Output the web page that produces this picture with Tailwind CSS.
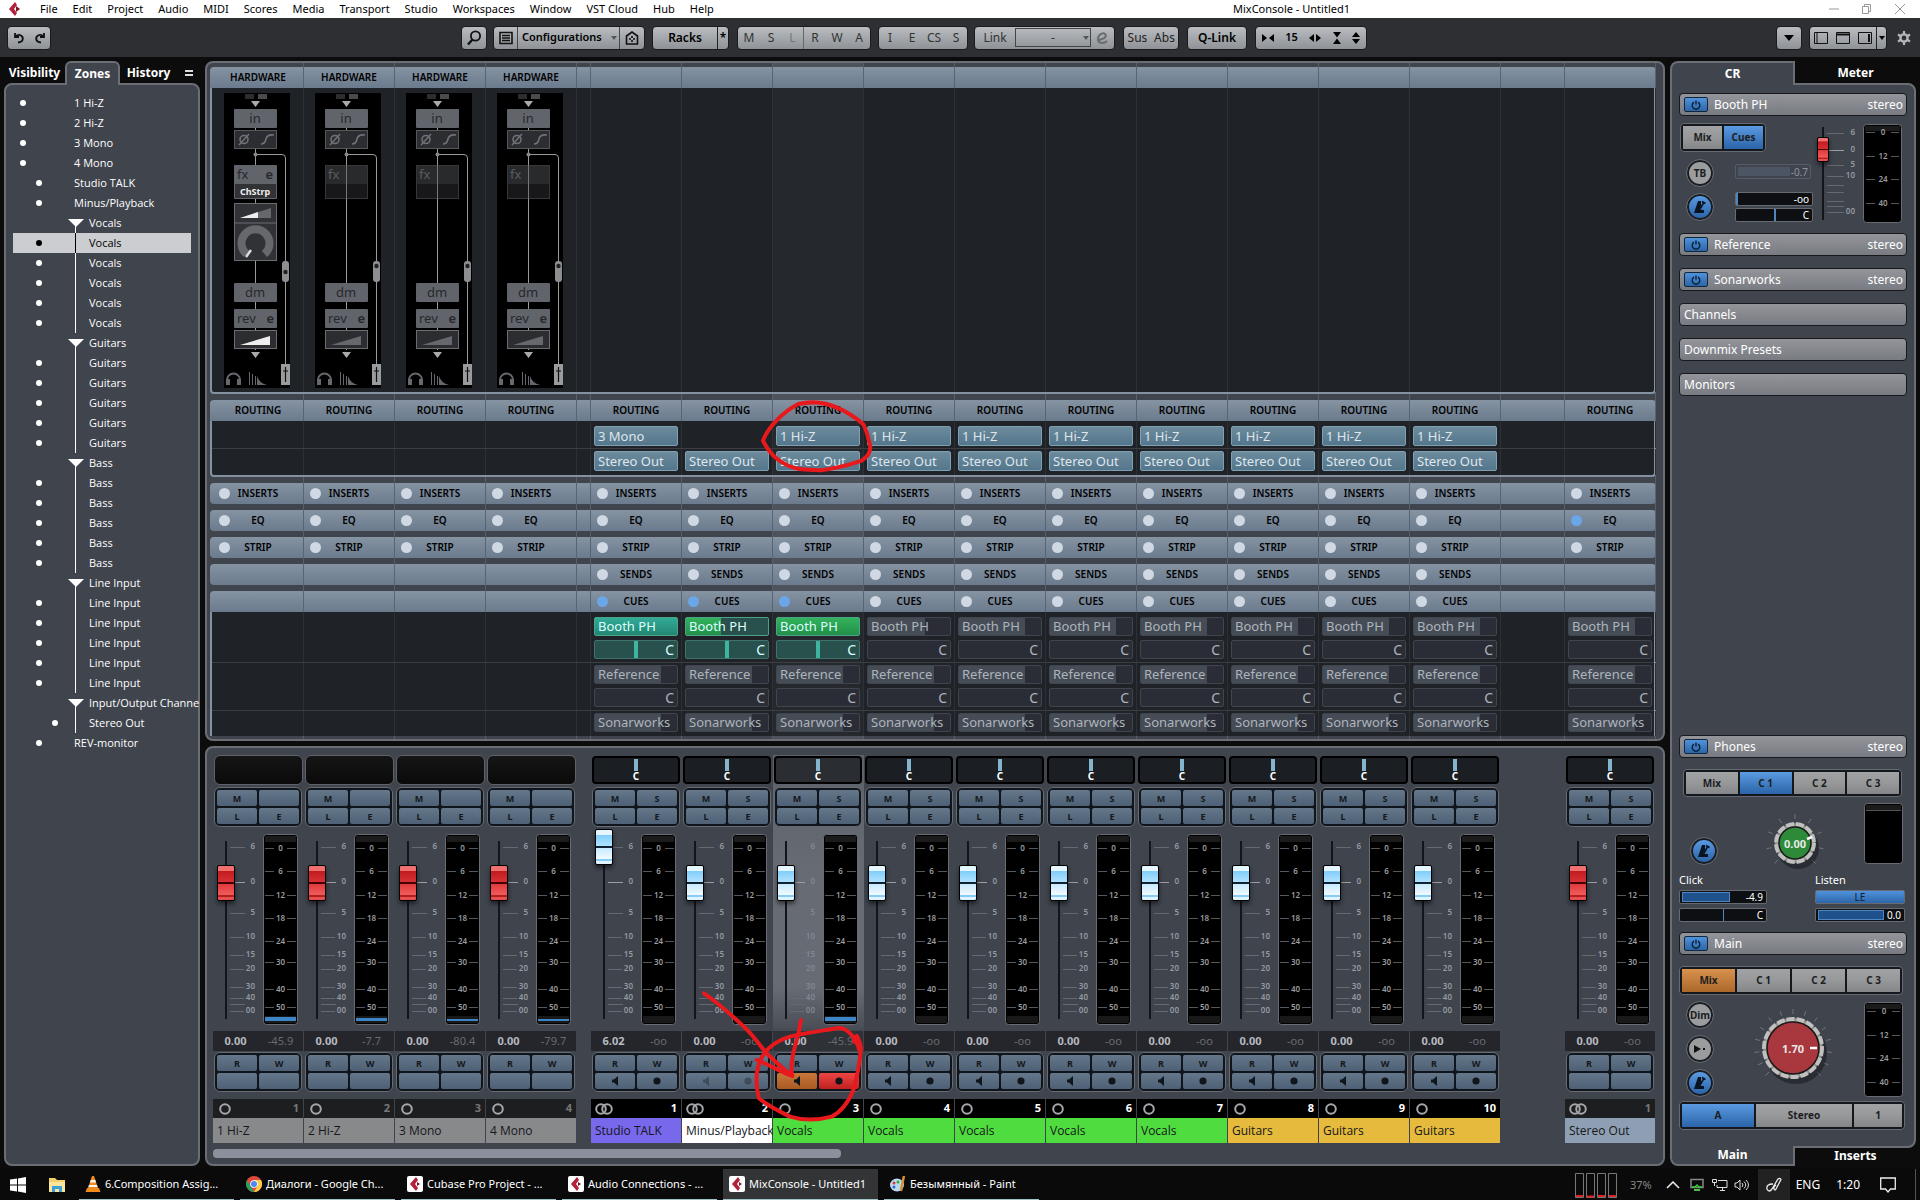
<!DOCTYPE html>
<html lang="en">
<head>
  <meta charset="UTF-8" />
  <meta name="viewport" content="width=device-width, initial-scale=1.0" />
  <title>MixConsole - Untitled1</title>
  <script src="https://cdn.jsdelivr.net/npm/@tailwindcss/browser@4"></script>
</head>
<body class="relative min-h-screen flex flex-col bg-[#0c0c0d] text-white font-['Noto_Sans','Open_Sans',sans-serif] text-[11px] overflow-x-hidden">

  <!-- MENU -->
  <header class="h-[18px] shrink-0 bg-white text-black flex items-center text-[11px]">
    <svg class="w-4 h-4 ml-[7px] mr-[17px]" viewBox="0 0 16 16">
      <path d="M8 1 L2 8 L8 15 L10 12 L7 8 L10 4 Z" fill="#b3203a"/><path d="M9 5 L13 8 L9 11 Z" fill="#7d1226"/>
    </svg>
    <nav class="flex gap-[15px]" id="menu"></nav>
    <span class="ml-auto w-[118px] whitespace-nowrap">MixConsole - Untitled1</span>
    <div class="ml-[478px] mr-[15px] flex items-center gap-[23px]">
      <button aria-label="Minimize"><svg class="w-2.5 h-3" viewBox="0 0 10 12"><path d="M0 6h10" stroke="#999"/></svg></button>
      <button aria-label="Restore"><svg class="w-2.5 h-3" viewBox="0 0 10 12" fill="none" stroke="#999"><path d="M.5 3.5h6v7h-6zM2.500 3.500v-2h6v7h-2"/></svg></button>
      <button aria-label="Close"><svg class="w-2.5 h-3" viewBox="0 0 10 12"><path d="M0 1l10 10M10 1L0 11" stroke="#999"/></svg></button>
    </div>
  </header>

  <!-- TOOLBAR -->
  <div class="h-[39px] shrink-0 bg-[#2d2f33] flex items-center px-[7px] text-black text-[12px]" id="toolbar">
    <div class="flex h-6 w-11 rounded-sm bg-linear-to-b from-[#b9bcc0] to-[#8f9397] border border-[#1a1b1d] items-center justify-around">
      <button aria-label="Undo"><svg class="w-3 h-3" viewBox="0 0 12 12" fill="none" stroke="#111" stroke-width="1.8"><path d="M2 1v4h4M2.500 4.500C6 1 11 4 9.500 8Q9 10 5 10.500"/></svg></button>
      <button aria-label="Redo"><svg class="w-3 h-3" viewBox="0 0 12 12" fill="none" stroke="#111" stroke-width="1.8"><path d="M10 1v4H6M9.500 4.500C6 1 1 4 2.500 8Q3 10 7 10.500"/></svg></button>
    </div>
    <button aria-label="Search" class="ml-[410px] h-6 w-[26px] rounded-sm bg-linear-to-b from-[#b9bcc0] to-[#8f9397] border border-[#1a1b1d] flex items-center justify-center">
      <svg class="w-4 h-4" viewBox="0 0 16 16" fill="none" stroke="#111" stroke-width="1.8"><circle cx="9.500" cy="6" r="4.600"/><path d="M6.500 9.500L2 14.500" stroke-width="2.400"/></svg>
    </button>
    <div class="ml-1.5 flex h-6 rounded-sm bg-linear-to-b from-[#b9bcc0] to-[#8f9397] border border-[#1a1b1d] font-semibold">
      <button aria-label="Show list" class="w-6 border-r border-[#44474b] flex items-center justify-center"><svg class="w-3.5 h-3.5" viewBox="0 0 14 14" fill="none" stroke="#111" stroke-width="1.6"><path d="M1 1.500h12v11H1zM3 4.500h8M3 7h8M3 9.500h8"/></svg></button>
      <button class="w-[102px] border-r border-[#44474b] flex items-center justify-between pl-1 pr-0.5 text-[11px]">Configurations <svg class="w-1.5 h-1.5" viewBox="0 0 6 6"><path d="M0 1h6L3 5z" fill="#555"/></svg></button>
      <button aria-label="Home" class="w-6 flex items-center justify-center"><svg class="w-3.5 h-3.5" viewBox="0 0 14 14" fill="none" stroke="#111" stroke-width="1.6"><path d="M1.500 5L7 1l5.500 4v8h-11z"/><path d="M4 8h2M8 8h2M7 5v2M7 9v2"/></svg></button>
    </div>
    <div class="ml-[7px] flex h-6 rounded-sm bg-linear-to-b from-[#b9bcc0] to-[#8f9397] border border-[#1a1b1d] font-semibold">
      <button class="w-[65px] border-r border-[#222]">Racks</button><button class="w-2.5 flex items-center justify-center">*</button>
    </div>
    <div class="ml-2 flex h-6 rounded-sm bg-linear-to-b from-[#b9bcc0] to-[#8f9397] border border-[#1a1b1d] text-[#333]">
      <button class="w-[22px]">M</button><button class="w-[22px]">S</button><button class="w-[22px] text-[#777] border-r border-[#666]">L</button><button class="w-[22px]">R</button><button class="w-[22px]">W</button><button class="w-[22px]">A</button>
    </div>
    <div class="ml-[7px] flex h-6 rounded-sm bg-linear-to-b from-[#b9bcc0] to-[#8f9397] border border-[#1a1b1d] text-[#333]">
      <button class="w-[22px]">I</button><button class="w-[22px]">E</button><button class="w-[22px]">CS</button><button class="w-[22px]">S</button>
    </div>
    <div class="ml-1.5 flex items-center h-6 rounded-sm bg-linear-to-b from-[#b9bcc0] to-[#8f9397] border border-[#1a1b1d] text-[#333]">
      <label for="linkGroup" class="w-10 text-center">Link</label>
      <select id="linkGroup" class="appearance-none w-[76px] h-[19px] border border-[#444] text-center leading-none"><option>-</option></select>
      <svg class="w-1.5 h-1.5 -ml-2" viewBox="0 0 6 6"><path d="M0 1h6L3 5z" fill="#555"/></svg>
      <button aria-label="Edit link" class="w-[25px] pl-1.5"><svg class="w-3.5 h-3.5" viewBox="0 0 14 14" fill="none" stroke="#6a6d70" stroke-width="2"><path d="M2 9C8 9 12 6 10.500 3.500 9 1 3 3 3 8c0 5 6 5 9 2"/></svg></button>
    </div>
    <div class="ml-2 flex h-6 rounded-sm bg-linear-to-b from-[#b9bcc0] to-[#8f9397] border border-[#1a1b1d] text-[#222]">
      <button class="w-[27px]">Sus</button><button class="w-[27px]">Abs</button>
    </div>
    <button class="ml-2 h-6 w-[60px] rounded-sm bg-linear-to-b from-[#b9bcc0] to-[#8f9397] border border-[#1a1b1d] font-semibold">Q-Link</button>
    <div class="ml-2 flex h-6 items-center justify-around w-[112px] rounded-sm bg-linear-to-b from-[#b9bcc0] to-[#8f9397] border border-[#1a1b1d] font-semibold text-[11px]">
      <button aria-label="Narrower"><svg class="w-3 h-2" viewBox="0 0 12 8"><path d="M0 0l5 4-5 4zM12 0L7 4l5 4z"/></svg></button>15
      <button aria-label="Wider"><svg class="w-3 h-2" viewBox="0 0 12 8"><path d="M5 0L0 4l5 4zM7 0l5 4-5 4z"/></svg></button>
      <button aria-label="Lower"><svg class="w-2 h-3" viewBox="0 0 8 12"><path d="M0 0h8L4 5.500zM0 12h8L4 6.500z"/></svg></button>
      <button aria-label="Higher"><svg class="w-2 h-3" viewBox="0 0 8 12"><path d="M0 5h8L4 0zM0 7h8L4 12z"/></svg></button>
    </div>
    <button aria-label="More" class="ml-auto h-6 w-[26px] rounded-sm bg-linear-to-b from-[#b9bcc0] to-[#8f9397] border border-[#1a1b1d] flex items-center justify-center"><svg class="w-2.5 h-1.5" viewBox="0 0 10 6"><path d="M0 0h10L5 6z"/></svg></button>
    <div class="ml-[7px] flex h-6 rounded-sm bg-linear-to-b from-[#b9bcc0] to-[#8f9397] border border-[#1a1b1d] items-center">
      <button aria-label="Left zone" class="w-[22px] flex justify-center"><svg class="w-3.5 h-3" viewBox="0 0 14 12" fill="none" stroke="#111"><path d="M.5.5h13v11H.5zM3 1v10" /></svg></button>
      <button aria-label="Top zone" class="w-[22px] flex justify-center"><svg class="w-3.5 h-3" viewBox="0 0 14 12" fill="none" stroke="#111"><path d="M.5.5h13v11H.5z"/><path d="M1 2.500h12" stroke-width="2"/></svg></button>
      <button aria-label="Right zone" class="w-[22px] flex justify-center"><svg class="w-3.5 h-3" viewBox="0 0 14 12" fill="none" stroke="#111"><path d="M.5.5h13v11H.5z"/><path d="M11 2v8" stroke-width="2"/></svg></button>
      <button aria-label="Zones" class="w-2.5 h-full border-l border-[#222] flex items-center justify-center"><svg class="w-1.5 h-1.5" viewBox="0 0 6 6"><path d="M0 1h6L3 5z"/></svg></button>
    </div>
    <button aria-label="Setup" class="ml-2.5 mr-0.5"><svg class="w-3.5 h-3.5" viewBox="0 0 14 14" fill="none" stroke="#b4b7ba"><circle cx="7" cy="7" r="3.600" stroke-width="2.400"/><path d="M7 0v3M7 11v3M1 3.500l2.500 1.500M10.500 9L13 10.500M1 10.500L3.500 9M10.500 5L13 3.500" stroke-width="2.200"/></svg></button>
  </div>

  <main class="flex-1 flex gap-[5px] px-1 pt-1 pb-[3px]">
    <!-- ZONES -->
    <aside class="w-[196px] shrink-0 flex flex-col">
      <div class="flex h-6 shrink-0 relative z-10 -mb-[2px] font-bold text-[12px]">
        <button class="w-[61px] text-center">Visibility</button>
        <button class="w-[55px] h-6 rounded-t-md border-2 border-b-0 border-[#6b6e75] bg-[#3f444d]">Zones</button>
        <button class="w-[57px] text-center">History</button>
        <button aria-label="Options" class="ml-2"><svg class="w-2 h-2" viewBox="0 0 8 8"><path d="M0 2h8M0 6h8" stroke="#ddd" stroke-width="2"/></svg></button>
      </div>
      <ul id="zones" class="flex-1 rounded-lg border-2 border-[#6b6e75] bg-[#3f444d] pt-2 px-[7px] font-['Open_Sans','Noto_Sans',sans-serif]"></ul>
    </aside>

    <div class="flex-1 min-w-0 flex flex-col gap-[5px]">
      <!-- RACKS -->
      <section class="relative flex-1 flex flex-col gap-1.5 rounded-lg border-2 border-[#6b6e75] bg-[#3f444d] pt-1 pb-[3px] pl-[3px] pr-[7px] overflow-hidden">
        <div id="lines" class="absolute inset-y-0 left-1.5 right-2 flex"></div>
        <div id="racks" class="relative flex-1 flex flex-col gap-1.5"></div>
      </section>
      <!-- FADERS -->
      <section class="rounded-lg border-2 border-[#6b6e75] bg-[#3f444d] pt-[7px] pb-1.5 pl-1.5 overflow-hidden">
        <div id="strips" class="flex"></div>
        <div class="mt-1.5 h-[9px] w-[628px] rounded-sm bg-[#8a919d]"></div>
      </section>
    </div>

    <!-- CONTROL ROOM -->
    <aside class="w-[246px] shrink-0 flex flex-col">
      <div class="flex h-6 shrink-0 relative z-10 -mb-[2px] font-bold text-[12px]">
        <button class="w-[125px] h-6 rounded-tl-lg border-2 border-b-0 border-[#6b6e75] bg-[#3f444d]">CR</button>
        <button class="flex-1">Meter</button>
      </div>
      <div id="room" class="flex-1 flex flex-col rounded-tr-lg rounded-br-lg border-2 border-[#6b6e75] bg-[#3f444d] pt-2 px-[7px]"></div>
      <div class="flex h-5 shrink-0 relative z-10 -mt-[2px] font-bold text-[12px]">
        <button class="w-[125px] h-5 rounded-bl-lg border-2 border-t-0 border-[#6b6e75] bg-[#3f444d] leading-none">Main</button>
        <button class="flex-1 leading-none">Inserts</button>
      </div>
    </aside>
  </main>

  <!-- TASKBAR -->
  <footer class="h-8 shrink-0 bg-[#0a0a0b] flex items-center text-[12px]">
    <button aria-label="Start" class="ml-2.5"><svg class="w-4 h-4" viewBox="0 0 16 16" fill="#fff"><path d="M0 2.500l7-1v6H0zM8 1.400L16 0v7.500H8zM0 8.500h7v6l-7-1zM8 8.500h8V16l-8-1.400z"/></svg></button>
    <button aria-label="Explorer" class="ml-[22px] mr-[13px]"><svg class="w-[18px] h-4" viewBox="0 0 18 16"><path d="M1 1h6l2 2h8v12H1z" fill="#f3cf6a"/><path d="M1 5h16v10H1z" fill="#fbe49c"/><path d="M4 15V9h10v6h-3v-3H7v3z" fill="#3aa0d8"/></svg></button>
    <div id="tasks" class="flex gap-1.5 h-full"></div>
    <div class="ml-auto flex items-center h-full">
      <svg class="w-[43px] h-[25px]" viewBox="0 0 43 25" fill="none" stroke="#777"><path d="M.5.500h8v24h-8zM11.500.500h8v24h-8zM22.500.500h8v24h-8zM33.500.500h8v24h-8z"/><path d="M1 23h7M12 23.500h7M23 23h7M34 23h7" stroke="#d22" stroke-width="2"/></svg>
      <span class="ml-3 text-[#888] text-[11px]">37%</span>
      <svg class="ml-3.5 w-3.5 h-2" viewBox="0 0 14 8" fill="none" stroke="#eee" stroke-width="1.500"><path d="M1 7l6-6 6 6"/></svg>
      <svg class="ml-2.5 w-3.5 h-3.5" viewBox="0 0 14 14" fill="none"><path d="M1 1.500h12v8H1z" stroke="#888" stroke-width="1.500"/><path d="M2 9h3l2-2 2 2h3" stroke="#3c3" stroke-width="1.500"/><path d="M4 12h6" stroke="#5b5" stroke-width="2"/></svg>
      <svg class="ml-2 w-4 h-3.5" viewBox="0 0 16 14" fill="none" stroke="#ddd"><path d="M6 2.500h9v7H5V7M8 12.500h5M10.500 10v2M.5 1.500h4v3h-4zM2.500 5v3"/></svg>
      <svg class="ml-1.5 w-4 h-3.5" viewBox="0 0 16 14" fill="none" stroke="#ddd"><path d="M1 5v4h2l3 3V2L3 5zM8 5q2 2 0 4M10 3.500q3.500 3.500 0 7M12 2q5 5 0 10"/></svg>
      <span class="ml-2 w-8 h-full bg-[#222] flex items-center justify-center"><svg class="w-4 h-4" viewBox="0 0 16 16" fill="none" stroke="#eee" stroke-width="1.300"><path d="M6 12L12 2q2-1.500 3 .5L10 12q-1 2-2 0t2-4M7 7Q0 7 1 12q2 4 5 0"/></svg></span>
      <span class="ml-1.5">ENG</span>
      <span class="ml-4">1:20</span>
      <svg class="ml-5 mr-[19px] w-4 h-4" viewBox="0 0 16 16" fill="none" stroke="#eee" stroke-width="1.300"><path d="M.7 1h14.600v11H10.500L8 15l-2.500-3H.7z"/></svg>
      <span class="h-full w-[5px] border-l border-[#555]"></span>
    </div>
  </footer>

  <!-- MARKER NOTES -->
  <svg class="absolute left-0 top-0 pointer-events-none z-20" width="1200" height="1200" fill="none" stroke="#e8191c" stroke-linecap="round" stroke-linejoin="round">
    <g transform="translate(680 390) scale(.3333)" stroke-width="12">
      <path d="M475 55C440 38 400 32 355 42C310 65 265 110 249 152C262 180 285 208 320 225C350 240 380 240 425 241C460 236 500 228 545 212C570 195 573 180 570 165C565 145 560 120 550 103C530 85 500 65 465 50"/>
    </g>
    <g transform="translate(560 740) scale(.3333)" stroke-width="12">
      <path d="M432 760C480 792 520 830 560 868C590 898 605 925 625 945C650 970 670 985 695 1006"/>
      <path d="M590 960C620 970 660 995 697 1008C690 970 700 940 710 900C718 880 718 860 723 840"/>
      <path d="M898 930C890 900 865 862 835 864C790 872 740 878 690 890C640 905 610 935 600 965C585 1000 588 1040 597 1075C620 1095 660 1115 690 1130C730 1142 770 1142 815 1130C850 1112 868 1080 880 1050C892 1010 900 960 903 925C900 905 895 895 890 888L882 905"/>
    </g>
  </svg>

<script>
const $ = id => document.getElementById(id);

/* 1. Menu */
$('menu').innerHTML = ['File','Edit','Project','Audio','MIDI','Scores','Media','Transport','Studio','Workspaces','Window','VST Cloud','Hub','Help']
  .map(t => `<button>${t}</button>`).join('');

/* 2. Zones: [name, kind] */
const group = (name, n) => [[name, 'head'], ...Array(n).fill([name, 'item'])];
const zones = [['1 Hi-Z','in'],['2 Hi-Z','in'],['3 Mono','in'],['4 Mono','in'],['Studio TALK','top'],['Minus/Playback','top'],
  ...group('Vocals', 5), ...group('Guitars', 5), ...group('Bass', 5), ...group('Line Input', 5),
  ['Input/Output Channe','head'],['Stereo Out','out'],['REV-monitor','top']];
const dotPad = { in: 'pl-[7px]', top: 'pl-[23px]', item: 'pl-[23px]', out: 'pl-[39px]', head: '' };
$('zones').innerHTML = zones.map(([name, kind], i) => {
  const sel = i === 7;
  const dot = kind === 'head' ? '' : `<span class="block w-1.5 h-1.5 rounded-full ${sel ? 'bg-black' : 'bg-white'}"></span>`;
  const tree = kind === 'head'
    ? `<svg class="w-4 h-5 shrink-0" viewBox="0 0 16 20"><path d="M0 6h16L8 14z" fill="#fff"/><path d="M7.500 12v8" stroke="#fff"/></svg>`
    : (kind === 'item' || kind === 'out') ? `<svg class="w-4 h-5 shrink-0" viewBox="0 0 16 20"><path d="M7.500 0v20" stroke="${sel ? '#000' : '#fff'}"/></svg>` : '';
  const inner = tree ? 'pl-[5px]' : '';
  return `<li class="h-5 flex items-center whitespace-nowrap ${sel ? 'bg-[#cbcdd0] text-black' : ''}">
    <span class="${tree ? 'w-[55px]' : 'w-[61px]'} shrink-0 ${dotPad[kind]}">${dot}</span>${tree}<span class="${inner}">${name}</span></li>`;
}).join('');

/* 3. Channels */
const ch = (name, o) => ({ name, ...o });
const cols = [
  ch('1 Hi-Z', { type: 'hw', n: 1, pk: '-45.9', lv: 4 }), ch('2 Hi-Z', { type: 'hw', n: 2, pk: '-7.7', lv: 3 }),
  ch('3 Mono', { type: 'hw', n: 3, pk: '-80.4', lv: 2 }), ch('4 Mono', { type: 'hw', n: 4, pk: '-79.7', lv: 2 }),
  { type: 'gap', w: 'w-[14px]' },
  ch('Studio TALK', { type: 'ch', n: 1, vol: '6.02', v: 100, inp: '3 Mono', cue: 'teal', fill: 100, st: 1, bg: 'bg-[#7868ec]' }),
  ch('Minus/Playback', { type: 'ch', n: 2, inp: '', cue: 'green', fill: 43, st: 1, bg: 'bg-white', dim: 1 }),
  ch('Vocals', { type: 'ch', n: 3, inp: '1 Hi-Z', cue: 'green', fill: 100, pk: '-45.9', lv: 4, sel: 1, bg: 'bg-[#4fdc3f]' }),
  ...[4, 5, 6, 7].map(n => ch('Vocals', { type: 'ch', n, inp: '1 Hi-Z', fill: n === 4 ? 69 : 80, bg: 'bg-[#4fdc3f]' })),
  ...[8, 9, 10].map(n => ch('Guitars', { type: 'ch', n, inp: '1 Hi-Z', fill: 80, bg: 'bg-[#e5ba3d]' })),
  { type: 'gap', w: 'w-[64px]' },
  ch('Stereo Out', { type: 'out', n: 1, fill: 80, st: 1, bg: 'bg-[#8f9fb3]' }),
];

$('lines').innerHTML = cols.map(c => `<div class="${c.w || 'w-[91px]'} shrink-0 border-r border-[#5a5e67] ${c.sel ? 'bg-white/8' : ''}"></div>`).join('');

const header = (label, types, round, blue = () => false, led = true) => `
  <div class="flex h-[21px] pl-[3px] shrink-0 bg-linear-to-b from-[#8593a2] to-[#6b7b8d] ${round} text-black text-[10px] font-semibold">
    ${cols.map(c => `<div class="${c.w || 'w-[91px]'} shrink-0 border-r border-[#566574] grid grid-cols-[17px_1fr_17px] items-center text-center">
      ${types.includes(c.type) ? `${led ? `<button aria-label="Bypass ${label}" class="w-[11px] h-[11px] ml-1.5 rounded-full ${blue(c) ? 'bg-[#6aa6e8]' : 'bg-[#cfd8e3]'}"></button>` : '<i></i>'}<span class="flex justify-center">${label}</span>` : ''}
    </div>`).join('')}
  </div>`;

const bodyRow = (cell, extra) => `<div class="flex pl-px ${extra}">
  ${cols.map(c => `<div class="${c.w || 'w-[91px]'} shrink-0 border-r border-[#2d3035] ${c.sel ? 'bg-[#25282d]' : ''}">${cell(c)}</div>`).join('')}</div>`;

const T = (x, y, t, fill, anchor = 'middle', size = 13, w = 400) => `<text x="${x}" y="${y}" fill="${fill}" text-anchor="${anchor}" font-size="${size}" font-weight="${w}">${t}</text>`;
const hardware = c => {
  if (c.type !== 'hw') return '';
  const on = c.n === 1, k = '#62646b', d = '#26282c';
  return `<svg class="block w-[66px] h-[295px] ml-[11px] mt-[5px] bg-black" viewBox="0 0 66 295">
    <path d="M31.500 35V257" stroke="#999"/>
    <path d="M31.500 61.500H58q3.500 0 3.500 3.500V272" fill="none" stroke="#999"/><circle cx="31.500" cy="61.500" r="2" fill="#888"/>
    <path d="M21 1h9v5h-9z" fill="#2c2d2f"/><path d="M34 1h9v5h-9z" fill="#4a4b4e"/>
    <path d="M27 8h9l-4.500 6zM27 259h9l-4.500 6z" fill="#aaa"/>
    <rect x="10" y="16" width="43" height="19" rx="1" fill="${k}"/>${T(31, 30, 'in', d)}
    <rect x="10.500" y="37.500" width="42" height="18" fill="#2b2d30" stroke="#55575c"/>
    <g fill="none" stroke="#6f7177" stroke-width="1.600"><circle cx="20" cy="46.500" r="4"/><path d="M15 52L25 41M37 51q4 0 5-5t8-4"/></g>
    ${on ? `<rect x="10" y="72" width="43" height="34" rx="1" fill="${k}"/><path d="M11 91h41v14H11z" fill="#303236"/>
      ${T(13, 86, 'fx', d, 'start')}${T(49, 86, 'e', d, 'end', 13, 600)}${T(31, 102, 'ChStrp', '#eee', 'middle', 9, 700)}
      <rect x="10.500" y="110.500" width="42" height="57" fill="#303236" stroke="#6a6c72"/><path d="M11 130h41" stroke="#6a6c72"/>
      <path d="M16 125L47 115v10z" fill="#66686e"/><path d="M16 125L34 119v6z" fill="#eee"/>
      <path d="M22.500 161A14 14 0 1 1 40.500 161" fill="none" stroke="#66686e" stroke-width="8"/><path d="M27 157L22 164" stroke="#ddd" stroke-width="2.500"/>`
    : `<g fill-opacity=".9"><rect x="10.500" y="72.500" width="42" height="33" fill="#1b1b1d" stroke="#36373a"/><path d="M11 73h41v18H11z" fill="#2b2c2f"/></g>
      <path d="M31.500 72v34" stroke="#777"/>${T(13, 86, 'fx', '#5a5c61', 'start')}`}
    <rect x="58" y="168" width="7" height="21" rx="3" fill="#8d8e90"/><circle cx="61.500" cy="${on ? 179 : 173}" r="2.200" fill="#222"/>
    <rect x="10" y="190" width="43" height="19" rx="1" fill="${k}"/>${T(31, 204, 'dm', d)}
    <rect x="10" y="216" width="43" height="19" rx="1" fill="${k}"/>${T(13, 230, 'rev', d, 'start')}${T(50, 230, 'e', d, 'end', 13, 600)}
    <rect x="10.500" y="237.500" width="42" height="18" fill="#2b2d30" stroke="#6a6c72"/><path d="M16 252L46 243v9z" fill="${on ? '#eee' : '#66686e'}"/>
    <path d="M3 291v-4a6.500 6.500 0 0 1 13 0v4" fill="none" stroke="#66686e" stroke-width="2"/><path d="M2 286h4v6H2zM13 286h4v6h-4z" fill="#66686e"/>
    <path d="M25.500 279v13M28.500 281v11M31.500 283v9" stroke="#66686e" /><path d="M33 283q2 7 10 9H33z" fill="#66686e"/>
    <path d="M57 271h9v21h-9z" fill="#9a9b9d"/><path d="M61.500 274v15M59 278h5" stroke="#111" stroke-width="1.200"/>
  </svg>`;
};

const slot = t => t ? `<button class="mx-[3px] w-[84px] h-5 block border border-[#7fa0b3] bg-linear-to-b from-[#6c8b9c] to-[#54768c] rounded-xs text-left pl-[3px] text-[13px] leading-none text-[#dfe6ec] whitespace-nowrap">${t}</button>` : '<div class="h-5"></div>';

const cueFill = { teal: 'bg-linear-to-b from-[#32ab98] to-[#238672]', green: 'bg-linear-to-b from-[#33b25c] to-[#23904a]' };
const cue = (name, fill, kind) => `<button class="relative mx-[3px] w-[84px] h-[19px] block border rounded-xs text-left text-[13px] leading-none whitespace-nowrap ${kind ? 'border-[#4aa588] bg-[#28504c] text-[#dff]' : 'border-[#41464e] bg-[#2a2d36] text-[#aeb4bc]'}">
  <span class="absolute inset-y-0 left-0 ${kind ? cueFill[kind] : 'bg-[#454c56]'}" style="width:${fill}%"></span><span class="relative pl-[3px]">${name}</span></button>`;
const pan = kind => `<div class="relative mx-[3px] mt-1 h-[19px] border rounded-xs ${kind ? 'border-[#3f746c] bg-[#28504c] text-[#dff]' : 'border-[#41464e] bg-[#2a2d36] text-[#aeb4bc]'}">
  <input type="range" aria-label="Pan" value="50" class="block appearance-none w-full h-full bg-transparent [&::-webkit-slider-thumb]:appearance-none [&::-webkit-slider-thumb]:w-1 [&::-webkit-slider-thumb]:h-[17px] ${kind ? '[&::-webkit-slider-thumb]:bg-[#3db5a0]' : '[&::-webkit-slider-thumb]:bg-transparent'}">
  <span class="absolute right-[3px] top-[2px] text-[14px] leading-none">C</span></div>`;
const hasCue = c => c.type === 'ch' || c.type === 'out';

$('racks').innerHTML = `
  <div class="flex-1 flex flex-col">
    ${header('HARDWARE', ['hw'], 'rounded-t-sm', undefined, false)}
    ${bodyRow(hardware, 'flex-1 min-h-[306px] bg-[#1f2227] border-2 border-t-0 border-[#8391a1] rounded-b-sm')}
  </div>
  <div>
    ${header('ROUTING', ['hw', 'ch', 'out'], 'rounded-t-sm', undefined, false)}
    <div class="border-2 border-t-0 border-[#8391a1] rounded-b-sm bg-[#1f2227]">
      ${bodyRow(c => c.type === 'ch' ? `<div class="pt-[5px] pb-[2px]">${slot(c.inp)}</div>` : '', 'h-7 border-b border-[#3b3e43]')}
      ${bodyRow(c => c.type === 'ch' ? `<div class="pt-[2px]">${slot('Stereo Out')}</div>` : '', 'h-[26px]')}
    </div>
  </div>
  ${header('INSERTS', ['hw', 'ch', 'out'], 'rounded-sm')}
  ${header('EQ', ['hw', 'ch', 'out'], 'rounded-sm', c => c.type === 'out')}
  ${header('STRIP', ['hw', 'ch', 'out'], 'rounded-sm')}
  ${header('SENDS', ['ch'], 'rounded-sm')}
  <div>
    ${header('CUES', ['ch'], 'rounded-t-sm', c => !!c.cue)}
    <div class="border-x-2 border-[#8391a1] bg-[#1f2227]">
      ${bodyRow(c => hasCue(c) ? `<div class="pt-[5px]">${cue('Booth PH', c.fill, c.cue)}${pan(c.cue)}</div>` : '', 'h-[51px] border-b border-[#3b3e43]')}
      ${bodyRow(c => hasCue(c) ? `<div class="pt-[2px]">${cue('Reference', 80)}${pan()}</div>` : '', 'h-12 border-b border-[#3b3e43]')}
      ${bodyRow(c => hasCue(c) ? `<div class="pt-[2px]">${cue('Sonarworks', 80)}</div>` : '', 'h-[25px]')}
    </div>
  </div>`;

/* 4. Fader strips */
const faderBase = 'absolute block appearance-none bg-transparent [writing-mode:vertical-lr] [direction:rtl] [&::-webkit-slider-thumb]:appearance-none [&::-webkit-slider-thumb]:border [&::-webkit-slider-thumb]:border-black [&::-webkit-slider-thumb]:rounded-xs [&::-webkit-slider-thumb]:shadow-[0_3px_4px_rgba(0,0,0,.5)]';
const redThumb = '[&::-webkit-slider-thumb]:bg-[linear-gradient(#f07070_0_14%,#c01c20_16%,#d83034_47%,#400_48%_52%,#e03c3e_54%,#f05a5a_84%,#b02020_86%_90%,#e85050_92%)]';
const blueThumb = '[&::-webkit-slider-thumb]:bg-[linear-gradient(#e4f6ff_0_14%,#82cefa_16%,#b0e2ff_47%,#123_48%_52%,#c8eaff_54%,#f0faff_84%,#86ccf4_86%_90%,#e0f4ff_92%)]';
const volMarks = [[18,'6',17],[53,'0',52],[84,'5',83],[108,'10',107],[126,'15',125],[140,'20',139],[158,'30',157],[169,'40',168],[175,'',0],[182,'00',181]];
const meterMarks = [[14,'0'],[37,'6'],[61,'12'],[84,'18'],[107,'24'],[128,'30'],[155,'40'],[173,'50']];

const fourBtn = (a, b, c, d, cc = '', dd = '') => `<div class="mx-px h-10 w-[88px] rounded-md border border-[#676b73] bg-[#10151b] p-0.5 grid grid-cols-2 grid-rows-2 gap-[2px] text-[9px] font-bold text-[#14181d]">
  ${[[a, ''], [b, ''], [c, cc], [d, dd]].map(([t, k]) => `<button aria-label="${/^[A-Z]$/.test(t) ? t : 'Monitor'}" class="${k || 'bg-linear-to-b from-[#65778a] to-[#4d6075]'} rounded-xs flex items-center justify-center leading-none">${t}</button>`).join('')}</div>`;
const speaker = o => `<svg class="w-2 h-2.5" viewBox="0 0 8 10" fill="#10151b" opacity="${o}"><path d="M1 3.500h2L7 0v10L3 6.500H1z"/></svg>`;
const rec = o => `<svg class="w-2 h-2" viewBox="0 0 8 8" fill="#10151b" opacity="${o}"><circle cx="4" cy="4" r="3.600"/></svg>`;
const ring = st => st
  ? '<svg class="w-[18px] h-3" viewBox="0 0 18 12" fill="none" stroke="#a5a7aa" stroke-width="2"><circle cx="6" cy="6" r="4.800"/><circle cx="12" cy="6" r="4.800"/></svg>'
  : '<svg class="w-3 h-3" viewBox="0 0 12 12" fill="none" stroke="#a5a7aa" stroke-width="2"><circle cx="6" cy="6" r="4.800"/></svg>';

$('strips').innerHTML = cols.map(c => {
  if (c.type === 'gap') return `<div class="${c.w} shrink-0"></div>`;
  const hw = c.type === 'hw', isCh = c.type === 'ch', o = c.dim ? .35 : 1;
  return `<div class="w-[91px] shrink-0 pr-px ${c.sel ? 'bg-[linear-gradient(#5b6069,#676b74_30%,#676b74_60%,#4b4f58_70%,#3f444d_72%)]' : ''}">
    ${hw ? '<div class="h-[30px] w-[89px] mx-auto rounded-md border border-[#5e6168] bg-linear-to-b from-[#151515] to-[#0a0a0a]"></div>'
      : `<div class="relative h-[28px] my-px w-[88px] mx-px rounded-sm border-2 border-black ${c.sel ? 'bg-[#2a2d32]' : 'bg-[#1b1f24]'}">
        <input type="range" aria-label="Pan ${c.name}" value="50" class="block appearance-none w-full h-3 mt-px bg-transparent [&::-webkit-slider-thumb]:appearance-none [&::-webkit-slider-thumb]:w-1 [&::-webkit-slider-thumb]:h-3 [&::-webkit-slider-thumb]:bg-[#86b4cc]">
        <span class="block text-center text-[10px] font-bold leading-[10px]">C</span></div>`}
    <div class="h-[2px]"></div>
    ${fourBtn('M', hw ? '' : 'S', 'L', 'E')}
    <div class="relative h-[200px] my-[2px]">
      <svg class="block w-[90px] h-[200px]" viewBox="0 0 90 200" font-size="8" font-weight="600">
        <path d="M13 12V190" stroke="#12161b" stroke-width="2"/>
        ${volMarks.map(([y, t]) => `<path d="M17 ${y}.500H${t.length < 2 ? 32 : 31}" stroke="${t === '0' ? '#9a9da3' : '#656a72'}"/>`).join('')}
        <g fill="${c.sel ? '#83878f' : '#969aa1'}" text-anchor="end">${volMarks.map(([, t, y]) => `<text x="42" y="${y + 3}">${t}</text>`).join('')}</g>
        <rect x="50.500" y="5.500" width="34" height="190" rx="3" fill="#000" stroke="#686b71"/>
        <rect x="52" y="7" width="31" height="6" fill="#1b1b1b"/><rect x="52" y="187" width="31" height="7" fill="#191919"/>
        <path d="${meterMarks.map(([y]) => `M52 ${y + 5}.500h9M74 ${y + 5}.500h9`).join('')}" stroke="#55575b"/>
        <g fill="#9a9b9e" text-anchor="middle">${meterMarks.map(([y, t]) => `<text x="67.500" y="${y + 8}">${t}</text>`).join('')}</g>
        ${c.lv ? `<rect x="52" y="${192 - c.lv}" width="31" height="${c.lv}" fill="#3d86c6"/>` : ''}
      </svg>
      <input type="range" aria-label="Volume ${c.name}" value="${c.v || 78}" class="${faderBase} left-1 top-0 w-[18px] h-[200px] [&::-webkit-slider-thumb]:w-[18px] [&::-webkit-slider-thumb]:h-9 ${isCh ? blueThumb : redThumb}">
    </div>
    <div class="h-5 ${c.sel ? 'bg-[#2e3136]' : 'bg-[#24262b]'} grid grid-cols-2 items-center text-center text-[11px] mb-px"><b class="text-[#b8bac0]">${c.vol || '0.00'}</b><span class="text-[#676b72]">${c.pk || '-oo'}</span></div>
    ${fourBtn('R', 'W', isCh ? speaker(o) : '', isCh ? rec(o) : '', c.sel ? 'bg-linear-to-b from-[#c8773a] to-[#a85a22]' : '', c.sel ? 'bg-linear-to-b from-[#ee4444] to-[#c02020]' : '')}
    <div class="mt-[7px] h-[19px] flex items-center justify-between px-1 text-[11px] font-bold ${isCh ? 'bg-black text-white' : 'bg-[#1d1e20] text-[#777]'}"><span class="${c.st ? '' : 'pl-0.5'}">${ring(c.st)}</span>${c.n}</div>
    <div class="h-[25px] pl-1 text-[12px] leading-[25px] whitespace-nowrap font-['Open_Sans','Noto_Sans',sans-serif] ${hw ? 'bg-[#88898b]' : c.bg} text-[#15171a]">${c.name}</div>
  </div>`;
}).join('');

/* 5. Control room */
const bar = (name, power) => `<div class="h-[23px] shrink-0 rounded-sm border border-[#17191c] bg-linear-to-b from-[#93959b] to-[#797b82] flex items-center text-[12px] ${power ? 'pl-1' : 'pl-1'} pr-[3px]">
  ${power ? `<button aria-label="Power ${name}" class="w-6 h-[15px] mr-1.5 rounded-xs border border-[#14263c] bg-linear-to-b from-[#4f93dc] to-[#2d66a8] flex items-center justify-center"><svg class="w-2.5 h-2.5" viewBox="0 0 10 10" fill="none" stroke="#0b2038" stroke-width="1.400"><path d="M3 2.200a3.800 3.800 0 1 0 4 0M5 .5v4"/></svg></button>` : ''}
  <span>${name}</span>${power ? '<span class="ml-auto">stereo</span>' : ''}</div>`;
const seg = (items, cls) => `<div class="flex gap-[2px] p-0.5 rounded-sm border border-[#666a72] bg-[#14171b] text-[10px] font-bold text-[#1c1e21] ${cls}">
  ${items.map(([t, k, w]) => `<button class="${w || 'flex-1'} h-full ${{ blue: 'bg-linear-to-b from-[#5b9be2] to-[#2b64a8]', orange: 'bg-linear-to-b from-[#d8924e] to-[#ac6829]', '': 'bg-linear-to-b from-[#a0a2a4] via-[#96989a] to-[#848688]' }[k || '']}">${t}</button>`).join('')}</div>`;
const metro = '<svg class="w-3.5 h-3.5" viewBox="0 0 14 14"><path d="M5 1h3v5L6 10h5v3H1z" fill="#0a1420"/><path d="M6.500 10L10.500 3M9 1.500l3.500 2" stroke="#0a1420" stroke-width="1.600"/></svg>';
const round = (label, t, blue) => `<button aria-label="${label}" class="w-[26px] h-[26px] shrink-0 rounded-full border-2 border-[#191c20] outline outline-[#666a72] flex items-center justify-center text-[10px] font-bold text-[#1c1e21] ${blue ? 'bg-linear-to-b from-[#5b9be2] to-[#2b64a8]' : 'bg-[#9a9c9e]'}">${t}</button>`;
const level = (t, fill, cls) => `<div class="relative h-3.5 rounded-xs border border-[#666a72] bg-[#0d0f12] p-px text-right text-[10px] leading-[11px] pr-[3px] ${cls}">${fill}<span class="relative">${t}</span></div>`;
const roomMeter = (h, first) => `<svg class="w-10 shrink-0" height="${h}" font-size="8" font-weight="600"><rect x=".5" y=".5" width="38" height="${h - 1}" rx="3" fill="#000" stroke="#686b71"/><rect x="2" y="2" width="35" height="5" fill="#1b1b1b"/>
  ${first ? ['0', '12', '24', '40'].map((t, i) => { const y = first + Math.round(i * 23.5); return `<path d="M3 ${y}.500h9M28 ${y}.500h8" stroke="#55575b"/><text x="20" y="${y + 3}" fill="#9a9b9e" text-anchor="middle">${t}</text>`; }).join('') : '<path d="M2 7.500h35" stroke="#555"/>'}</svg>`;
const knob = (size, r, color, text, tick, n) => {
  const c = size / 2;
  let marks = '';
  for (let i = 0; i < n; i++) {
    const a = (135 + i * 270 / (n - 1)) * Math.PI / 180;
    marks += `M${(c + Math.cos(a) * (r + 3)).toFixed(1)} ${(c + Math.sin(a) * (r + 3)).toFixed(1)}L${(c + Math.cos(a) * (r + 8)).toFixed(1)} ${(c + Math.sin(a) * (r + 8)).toFixed(1)}`;
  }
  return `<svg width="${size}" height="${size}" role="slider" aria-label="Level" class="shrink-0"><path d="${marks}" stroke="#71757c"/>
    <circle cx="${c + 3}" cy="${c + 5}" r="${r}" fill="#000" opacity=".35"/><circle cx="${c}" cy="${c}" r="${r - 1}" fill="#8f8f8d"/><circle cx="${c}" cy="${c}" r="${r - 2}" fill="none" stroke="#c0c0be" stroke-width="4" stroke-dasharray="8 2"/>
    <circle cx="${c}" cy="${c}" r="${r - 5}" fill="${color}" stroke="#1a1a1a" stroke-width="1.500"/>
    <path d="${tick}" stroke="#fff" stroke-width="2.500"/><text x="${c}" y="${c + 5}" text-anchor="middle" font-size="11" font-weight="700" fill="#e8e8e8">${text}</text></svg>`;
};

$('room').innerHTML = `
  ${bar('Booth PH', 1)}
  <div class="h-[117px] shrink-0 flex pl-px">
    <div class="w-[133px] pt-[7px]">
      ${seg([['Mix'], ['Cues', 'blue']], 'w-[86px] h-[29px]')}
      <div class="flex pt-2">
        <div class="flex flex-col gap-2 pl-[7px] w-[55px]">${round('Talkback', 'TB')}${round('Metronome', metro, 1)}</div>
        <div class="w-[78px] pt-1">
          <div class="h-[15px] w-[76px] rounded-xs border border-[#565c66] p-0.5 text-right text-[10px] leading-[10px] text-[#8f959e] relative"><span class="absolute left-0.5 inset-y-0.5 w-[52px] bg-[#4b5564]"></span><span class="relative">-0.7</span></div>
          ${level('-oo', '<span class="absolute left-0 inset-y-0 w-[2px] bg-[#4f86c0]"></span>', 'mt-[13px]')}
          ${level('C', '<span class="absolute left-1/2 inset-y-0 w-[2px] bg-[#4f86c0]"></span>', 'mt-[2px]')}
        </div>
      </div>
    </div>
    <div class="relative w-[50px] h-[104px] mt-[5px]">
      <svg class="block w-[50px] h-[104px]" font-size="8" font-weight="600"><path d="M10 6V99" stroke="#12161b" stroke-width="2"/>
        <path d="M14 12.500h17M14 44.500h17M14 55.500h17M14 64.500h17M14 71.500h17M14 80.500h17M14 85.500h17M14 91.500h17" stroke="#656a72"/><path d="M14 29.500h17" stroke="#9a9da3"/>
        <g fill="#969aa1" text-anchor="end"><text x="42" y="14">6</text><text x="42" y="31">0</text><text x="42" y="46">5</text><text x="42" y="57">10</text><text x="42" y="93">00</text></g></svg>
      <input type="range" aria-label="Booth level" value="80" class="${faderBase} left-1 top-0 w-3 h-[104px] [&::-webkit-slider-thumb]:w-3 [&::-webkit-slider-thumb]:h-[25px] ${redThumb}">
    </div>
    <div class="pt-2">${roomMeter(99, 8)}</div>
  </div>
  <div class="flex flex-col gap-3">${bar('Reference', 1)}${bar('Sonarworks', 1)}${bar('Channels')}${bar('Downmix Presets')}${bar('Monitors')}</div>
  <div class="flex-1"></div>
  ${bar('Phones', 1)}
  ${seg([['Mix'], ['C 1', 'blue'], ['C 2'], ['C 3']], 'mt-[11px] ml-1 w-[219px] h-7 shrink-0')}
  <div class="h-[73px] shrink-0 flex justify-between pt-1.5 pr-[3px] pl-3">
    <div class="pt-[35px]">${round('Metronome', metro, 1)}</div>
    <div class="pl-2 pt-1.5">${knob(68, 21, '#2c8a39', '0.00', 'M46 30l5-2', 9)}</div>
    ${roomMeter(61, 0)}
  </div>
  <div class="flex justify-between pr-0.5 text-[11px] shrink-0">
    <div class="w-[88px]"><div class="h-5 leading-5">Click</div>
      ${level('-4.9', '<span class="absolute left-0.5 inset-y-px w-12 border border-[#4f86c0] bg-[#1f528c]"></span>', '')}
      ${level('C', '<span class="absolute left-1/2 inset-y-0 w-px bg-[#4f86c0]"></span>', 'mt-1')}</div>
    <div class="w-[90px]"><div class="h-5 leading-5">Listen</div>
      <button class="block w-full h-3.5 rounded-xs border border-[#666a72] bg-linear-to-b from-[#4f93dc] to-[#2d66a8] text-[#0b2038] text-[10px] leading-none text-center">LE</button>
      ${level('0.0', '<span class="absolute left-0.5 inset-y-px w-[66px] border border-[#4f86c0] bg-[#1f528c]"></span>', 'mt-1')}</div>
  </div>
  <div class="h-2.5 shrink-0"></div>
  ${bar('Main', 1)}
  ${seg([['Mix', 'orange'], ['C 1'], ['C 2'], ['C 3']], 'mt-[11px] w-[224px] h-[29px] shrink-0')}
  <div class="h-[106px] shrink-0 flex justify-between pt-[7px] pr-[3px] pl-2">
    <div class="flex flex-col gap-2">${round('Dim', 'Dim')}${round('Reference level', '<svg class="w-3 h-2.5" viewBox="0 0 12 10"><path d="M0 1l7 4-7 4zM9 4h2v2H9z" fill="#111"/></svg>')}${round('Metronome', metro, 1)}</div>
    <div class="pl-2">${knob(92, 31, '#a8383d', '1.70', 'M63 46h7', 15)}</div>
    ${roomMeter(95, 9)}
  </div>
  ${seg([['A', 'blue', 'w-[72px]'], ['Stereo'], ['1', '', 'w-12']], 'w-[226px] h-[29px] shrink-0')}
  <div class="h-4 shrink-0"></div>`;

/* 6. Taskbar */
const cubase = '<svg class="w-4 h-4" viewBox="0 0 16 16"><rect width="16" height="16" rx="2" fill="#fff"/><path d="M9 1L3 8l6 7 2-3-3-4 3-4z" fill="#b3203a"/><path d="M10 6l3 2-3 2z" fill="#7d1226"/></svg>';
const tasks = [
  ['6.Composition Assig...', '<svg class="w-4 h-4" viewBox="0 0 16 16"><path d="M7 0h2l4 12H3z" fill="#ef8a1d"/><path d="M5.700 4h4.600l.8 2.500H4.900zM4 9h8l.6 2H3.400z" fill="#f4f4f4"/><path d="M2 12h12l1.500 4H.5z" fill="#ef8a1d"/></svg>'],
  ['Диалоги - Google Ch...', '<svg class="w-4 h-4" viewBox="0 0 16 16"><circle cx="8" cy="8" r="8" fill="#dd4b3e"/><path d="M1 4.200L8 16A8 8 0 0 1 1 4.200z" fill="#1da362"/><path d="M8 16a8 8 0 0 0 7-12H8l3.500 6z" fill="#fdce45"/><circle cx="8" cy="8" r="3.800" fill="#fff"/><circle cx="8" cy="8" r="3" fill="#4a8af4"/></svg>'],
  ['Cubase Pro Project - ...', cubase], ['Audio Connections - ...', cubase], ['MixConsole - Untitled1', cubase],
  ['Безымянный - Paint', '<svg class="w-4 h-4" viewBox="0 0 16 16"><ellipse cx="7" cy="9" rx="7" ry="6.500" fill="#b9d9ee"/><circle cx="4" cy="7" r="1.500" fill="#d33"/><circle cx="8" cy="6" r="1.500" fill="#3a3"/><circle cx="4" cy="11" r="1.500" fill="#36c"/><path d="M14 0l-2 9-1 6" stroke="#d99032" stroke-width="2.500" fill="none"/></svg>'],
];
$('tasks').innerHTML = tasks.map(([t, icon], i) => `<button class="w-[155px] h-full border-b-2 border-[#9fc4c8] flex items-center gap-1 pl-1.5 text-[11px] whitespace-nowrap ${i === 4 ? 'bg-[#333435]' : ''}">${icon}<span>${t}</span></button>`).join('');
</script>
</body>
</html>
